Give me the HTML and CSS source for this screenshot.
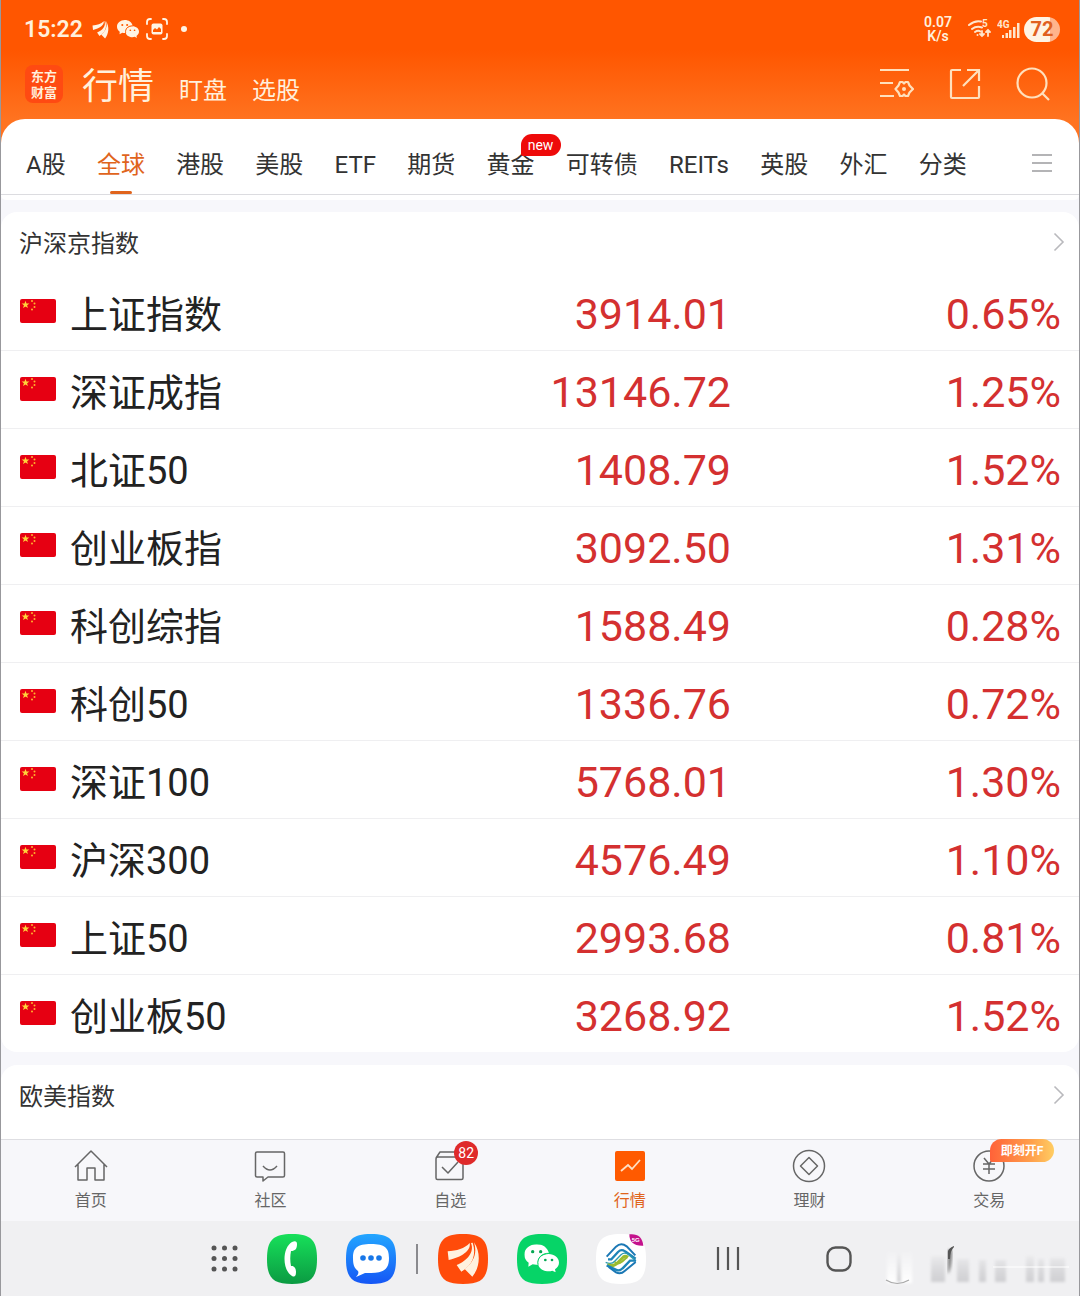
FILE: index.html
```html
<!DOCTYPE html>
<html lang="zh-CN">
<head>
<meta charset="utf-8">
<meta name="viewport" content="width=device-width, initial-scale=1">
<title>行情</title>
<link rel="stylesheet" href="styles.css">
</head>
<body>
<svg class="sprite" aria-hidden="true">
  <symbol id="flag-cn" viewBox="0 0 36 24">
    <rect width="36" height="24" rx="2" fill="#e60012"/>
    <path fill="#ffd43a" d="M5.500 1.800l1 2.700h2.900L7.100 6.200l.8 2.900-2.400-1.700-2.400 1.700.8-2.900-2.300-1.700h2.900z"/>
    <g fill="#ffb52e"><circle cx="12" cy="2" r="1"/><circle cx="14.500" cy="4.500" r="1"/><circle cx="14.500" cy="8" r="1"/><circle cx="12" cy="10.500" r="1"/></g>
  </symbol>
  <symbol id="chevron" viewBox="0 0 12 20"><path d="M1.500 1.500L10 10l-8.500 8.500" fill="none" stroke="#b9b9bd" stroke-width="1.600"/></symbol>
  <symbol id="feathers" viewBox="26 20 106 110">
    <path d="M29 52C56 50 80 44 95 27C100 50 70 70 32 78Z"/>
    <path d="M99 27C110 54 88 80 56 93L70 113C104 92 116 62 104 26Z"/>
    <path d="M108 25C118 55 109 83 80 105L103 128C124 103 131 59 108 25Z"/>
  </symbol>
  <symbol id="wechat" viewBox="0 0 104 84">
    <path d="M37 0C16 0 0 14 0 31c0 10 5 18 13 24l-1 12 13-7c5 1 10 2 16 1-4-20 12-35 33-34C70 10 55 0 37 0z"/>
    <path d="M73 29c-18 0-32 11-32 26s14 26 32 26c4 0 8-1 11-2l10 5-2-9c7-5 12-12 12-20 0-15-14-26-31-26z"/>
  </symbol>
</svg>

<div class="app">
  <header class="top">
    <div class="status">
      <div class="status-left">
        <time class="clock">15:22</time>
        <svg class="s-feather" width="18" height="19" fill="#fff4e4"><use href="#feathers"/></svg>
        <svg class="s-wechat" width="22" height="18" viewBox="0 0 104 84"><use href="#wechat" fill="#fff4e4"/><g fill="#ff5a00"><circle cx="25" cy="23" r="5"/><circle cx="48" cy="23" r="5"/><circle cx="63" cy="48" r="4"/><circle cx="83" cy="48" r="4"/></g><path d="M41 61C37 41 53 26 74 27" fill="none" stroke="#ff5a00" stroke-width="4"/></svg>
        <svg width="22" height="22" viewBox="0 0 22 22" fill="none" stroke="#fff4e4" stroke-width="1.800" stroke-linecap="round"><path d="M1 6V4q0-3 3-3h1M17 1h1q3 0 3 3v2M21 16v2q0 3-3 3h-1M5 21H4q-3 0-3-3v-2"/><rect x="5.500" y="5.500" width="11" height="11" rx="2" fill="#fff4e4" stroke="none"/><path d="M7 14v-2l2-2 2 1.500 2-2.500 2 2v3z" fill="#ff5a00" stroke="none"/></svg>
        <span class="more-dot"></span>
      </div>
      <div class="status-right">
        <div class="speed"><span>0.07</span><span>K/s</span></div>
        <svg width="25" height="20" viewBox="0 0 25 20" fill="none" stroke="#ffe6cc" stroke-width="2" stroke-linecap="round"><path d="M1 6Q7 1 13 2.500M4 10q4.500-3.500 10-1.500M7 13q3-2 5.500-.5"/><circle cx="9.500" cy="16" r="1" fill="#ffe6cc" stroke="none"/><path d="M14 12v5m-2-2l2 2 2-2M20 17v-6m-2 2l2-2 2 2" stroke-width="1.800"/><text x="14" y="8" class="tiny-mark">5</text></svg>
        <svg width="23" height="20" viewBox="0 0 23 20" fill="#ffe6cc"><text x="0" y="9" class="tiny-mark">4G</text><path d="M5 16h2v3H5zM8.500 14H11v5H8.500zM12 11h2.500v8H12zM16 8h2.500v11H16zM20 4h2.500v15H20z"/></svg>
        <span class="battery">72</span>
      </div>
    </div>
    <div class="titlebar">
      <span class="brand"><span>东方</span><span>财富</span></span>
      <nav class="sections">
        <a class="section current" href="#market">行情</a>
        <a class="section" href="#watch">盯盘</a>
        <a class="section" href="#pick">选股</a>
      </nav>
      <div class="tools">
        <button type="button" aria-label="设置"><svg width="34" height="32" viewBox="0 0 34 32" fill="none" stroke="#ffe0bd" stroke-width="2.200"><path d="M0 2h29M0 15h13M0 28h14"/><path d="M20 14h2.500l1.500 1.500 1.500-1.500H28l1.500 3.500L33 21l-3.500 3.500L28 28h-2.500L24 26.500 22.500 28H20l-1.500-3.500L15.500 21l3-3.500z" stroke-linejoin="round"/><circle cx="24" cy="21" r="2" fill="#ffe0bd" stroke="none"/></svg></button>
        <button type="button" aria-label="分享"><svg width="32" height="32" viewBox="0 0 32 32" fill="none" stroke="#ffe0bd" stroke-width="2.200"><path d="M12 2H3q-1 0-1 1v26q0 1 1 1h26q1 0 1-1V18M18 2h12v11M30 2L14 18"/></svg></button>
        <button type="button" aria-label="搜索"><svg width="34" height="34" viewBox="0 0 34 34" fill="none" stroke="#ffe0bd" stroke-width="2.200"><circle cx="16" cy="16" r="14.500"/><path d="M26 26l7 7"/></svg></button>
      </div>
    </div>
  </header>

  <nav class="tabs">
    <a class="tab" href="#a">A股</a>
    <a class="tab active" href="#global">全球</a>
    <a class="tab" href="#hk">港股</a>
    <a class="tab" href="#us">美股</a>
    <a class="tab" href="#etf">ETF</a>
    <a class="tab" href="#futures">期货</a>
    <a class="tab" href="#gold">黄金<span class="new-badge">new</span></a>
    <a class="tab" href="#cb">可转债</a>
    <a class="tab" href="#reits">REITs</a>
    <a class="tab" href="#uk">英股</a>
    <a class="tab" href="#fx">外汇</a>
    <a class="tab" href="#all">分类</a>
    <button class="menu" type="button" aria-label="菜单"><svg width="20" height="20" viewBox="0 0 20 20" stroke="#b4b4b6" stroke-width="2"><path d="M0 2h20M0 10h20M0 18h20"/></svg></button>
  </nav>

  <main class="content">
    <div class="card-tail"></div>
    <section class="card">
      <h2 class="card-head"><a href="#cn">沪深京指数<svg width="12" height="20"><use href="#chevron"/></svg></a></h2>
      <table class="quotes">
        <tbody>
          <tr><th scope="row"><span class="name"><svg class="flag"><use href="#flag-cn"/></svg>上证指数</span></th><td class="price">3914.01</td><td class="change">0.65%</td></tr>
          <tr><th scope="row"><span class="name"><svg class="flag"><use href="#flag-cn"/></svg>深证成指</span></th><td class="price">13146.72</td><td class="change">1.25%</td></tr>
          <tr><th scope="row"><span class="name"><svg class="flag"><use href="#flag-cn"/></svg>北证50</span></th><td class="price">1408.79</td><td class="change">1.52%</td></tr>
          <tr><th scope="row"><span class="name"><svg class="flag"><use href="#flag-cn"/></svg>创业板指</span></th><td class="price">3092.50</td><td class="change">1.31%</td></tr>
          <tr><th scope="row"><span class="name"><svg class="flag"><use href="#flag-cn"/></svg>科创综指</span></th><td class="price">1588.49</td><td class="change">0.28%</td></tr>
          <tr><th scope="row"><span class="name"><svg class="flag"><use href="#flag-cn"/></svg>科创50</span></th><td class="price">1336.76</td><td class="change">0.72%</td></tr>
          <tr><th scope="row"><span class="name"><svg class="flag"><use href="#flag-cn"/></svg>深证100</span></th><td class="price">5768.01</td><td class="change">1.30%</td></tr>
          <tr><th scope="row"><span class="name"><svg class="flag"><use href="#flag-cn"/></svg>沪深300</span></th><td class="price">4576.49</td><td class="change">1.10%</td></tr>
          <tr><th scope="row"><span class="name"><svg class="flag"><use href="#flag-cn"/></svg>上证50</span></th><td class="price">2993.68</td><td class="change">0.81%</td></tr>
          <tr><th scope="row"><span class="name"><svg class="flag"><use href="#flag-cn"/></svg>创业板50</span></th><td class="price">3268.92</td><td class="change">1.52%</td></tr>
        </tbody>
      </table>
    </section>
    <section class="card card-next">
      <h2 class="card-head"><a href="#west">欧美指数<svg width="12" height="20"><use href="#chevron"/></svg></a></h2>
    </section>
  </main>

  <nav class="bottom">
    <a href="#home"><span class="ico"><svg width="34" height="34" viewBox="0 0 34 34" class="line"><path d="M1 18L17 2l16 16M4 15v16h9V19h8v12h9V15"/></svg></span>首页</a>
    <a href="#community"><span class="ico"><svg width="34" height="34" viewBox="0 0 34 34" class="line"><path d="M4 3h26q1.500 0 1.500 1.500v22q0 1.500-1.500 1.500H15l-5 4v-4H4q-1.500 0-1.500-1.500v-22Q2.500 3 4 3M10 17q7 8 14 0"/></svg></span>社区</a>
    <a href="#mine"><span class="ico"><svg width="34" height="34" viewBox="0 0 34 34" class="line"><path d="M3 10v19q0 1.500 1.500 1.500h24q1.500 0 1.500-1.500V8M3 10q0-2 2-2h25L26 3H7L3 9M9 18l6 6 10-11"/></svg><span class="count">82</span></span>自选</a>
    <a class="active" href="#market"><span class="ico"><svg width="34" height="34" viewBox="0 0 34 34"><rect x="2" y="2" width="30" height="30" rx="2" fill="#ff5a00"/><path d="M8 22l7-6 4 4 8-9" fill="none" stroke="#ffe0c4" stroke-width="1.800"/></svg></span>行情</a>
    <a href="#wealth"><span class="ico"><svg width="34" height="34" viewBox="0 0 34 34" class="line"><circle cx="17" cy="17" r="15.500"/><path d="M17 8.500l8.500 8.500-8.500 8.500L8.500 17z"/></svg></span>理财</a>
    <a href="#trade"><span class="ico"><svg width="34" height="34" viewBox="0 0 34 34" class="line"><circle cx="17" cy="17" r="15"/><path d="M12 9l5 6 5-6M11 15h12M11 20h12M17 15v10"/></svg><span class="promo">即刻开F</span></span>交易</a>
  </nav>

  <footer class="dock">
    <div class="dock-group">
      <button type="button" aria-label="应用"><svg width="27" height="27" viewBox="0 0 27 27" fill="#555"><circle cx="3" cy="3" r="2.500"/><circle cx="13.500" cy="3" r="2.500"/><circle cx="24" cy="3" r="2.500"/><circle cx="3" cy="13.500" r="2.500"/><circle cx="13.500" cy="13.500" r="2.500"/><circle cx="24" cy="13.500" r="2.500"/><circle cx="3" cy="24" r="2.500"/><circle cx="13.500" cy="24" r="2.500"/><circle cx="24" cy="24" r="2.500"/></svg></button>
      <button type="button" aria-label="电话"><svg width="50" height="50" viewBox="0 0 50 50"><defs><linearGradient id="g-phone" x2="0" y2="1"><stop stop-color="#17e05a"/><stop offset="1" stop-color="#0b9a42"/></linearGradient></defs><path d="M25 0C44 0 50 6 50 25S44 50 25 50 0 44 0 25 6 0 25 0z" fill="url(#g-phone)"/><path d="M25 8c3-1.500 5-1 5 2 0 5-2 7-6 7-1 5-1 10 0 15 3-.5 5 2 5 6 0 5-2 5-4 4-10-6-10-28 0-34z" fill="#fff"/></svg></button>
      <button type="button" aria-label="信息"><svg width="50" height="50" viewBox="0 0 50 50"><defs><linearGradient id="g-msg" x2="0" y2="1"><stop stop-color="#23a6ff"/><stop offset="1" stop-color="#1556f5"/></linearGradient></defs><path d="M25 0C44 0 50 6 50 25S44 50 25 50 0 44 0 25 6 0 25 0z" fill="url(#g-msg)"/><path d="M25 10c14 0 18 4 18 14s-4 15-18 15h-6l-9 4c2-2 3-4 2-6-4-3-5-7-5-13 0-10 4-14 18-14z" fill="#fff"/><g fill="#1877e8"><circle cx="17" cy="24" r="2.800"/><circle cx="25" cy="24" r="2.800"/><circle cx="33" cy="24" r="2.800"/></g></svg></button>
    </div>
    <span class="dock-sep"></span>
    <div class="dock-group">
      <button type="button" aria-label="东方财富"><svg width="50" height="50" viewBox="0 0 150 150"><path d="M75 0C132 0 150 18 150 75s-18 75-75 75S0 132 0 75 18 0 75 0z" fill="#ff4b0a"/><use href="#feathers" x="26" y="20" width="106" height="110" fill="#fff2df"/></svg></button>
      <button type="button" aria-label="微信"><svg width="50" height="50" viewBox="0 0 150 150"><path d="M75 0C132 0 150 18 150 75s-18 75-75 75S0 132 0 75 18 0 75 0z" fill="#06d467"/><g transform="translate(22 31)"><use href="#wechat" width="104" height="84" fill="#fff"/><path d="M41 61C37 41 53 26 74 27" fill="none" stroke="#06d467" stroke-width="3"/><g fill="#06a853"><circle cx="25" cy="22" r="5"/><circle cx="49" cy="22" r="5"/><circle cx="63" cy="47" r="4"/><circle cx="83" cy="47" r="4"/></g></g></svg></button>
      <button type="button" aria-label="中国移动"><svg width="50" height="50" viewBox="0 0 150 150"><path d="M75 0C132 0 150 18 150 75s-18 75-75 75S0 132 0 75 18 0 75 0z" fill="#fff"/><g fill="none" stroke-width="6"><path d="M32 68L60 38Q75 24 92 37L118 64" stroke="#1b78b5"/><path d="M36 76h10L66 54q10-10 21-2l32 22" stroke="#1d84b8" stroke-width="7"/><path d="M29 85q17 8 28-4l18-19q10-9 21-1l24 20" stroke="#2b9bb0" stroke-width="4"/><path d="M34 92q18 8 31-6l17-17q6-5 14 1" stroke="#9bbb2f" stroke-width="9"/><path d="M56 84q12 9 22-1l15-13" stroke="#9bbb2f" stroke-width="6"/><path d="M32 94l27 13q12 6 21-4l22-23h18" stroke="#1d84b8" stroke-width="7"/><path d="M38 99l22 16q14 7 26-4l33-27" stroke="#1b78b5"/></g><path d="M100 1q38-4 42 34q-42 2-42-34z" fill="#c4128c"/><text x="107" y="25" class="five-g">5G</text></svg></button>
    </div>
    <div class="dock-keys">
      <button type="button" aria-label="最近任务"><svg width="24" height="25" viewBox="0 0 24 25" stroke="#555" stroke-width="2.200"><path d="M2 1v23M12 1v23M22 1v23"/></svg></button>
      <button type="button" aria-label="主页"><svg width="26" height="26" viewBox="0 0 26 26"><rect x="1.500" y="1.500" width="23" height="23" rx="8" fill="none" stroke="#555" stroke-width="2.400"/></svg></button>
    </div>
    <svg class="smudge" width="194" height="44" viewBox="0 0 194 44" aria-hidden="true">
      <defs>
        <filter id="soft" x="-20%" y="-20%" width="140%" height="140%"><feGaussianBlur stdDeviation="1.800"/></filter>
        <linearGradient id="fade" x2="0" y2="1"><stop stop-color="#c4c4c8" stop-opacity="0"/><stop offset="1" stop-color="#cfcfd2"/></linearGradient>
        <linearGradient id="lift" x2="0" y2="1"><stop stop-color="#fff" stop-opacity="0"/><stop offset="1" stop-color="#fff"/></linearGradient>
      </defs>
      <g filter="url(#soft)"><path d="M6 4h25v33H6z" fill="url(#lift)"/><path d="M16 6h4v30h-4zM50 10h14v26H50zM76 13h12v23H76zM98 14h7v22h-7zM114 14h11v22h-11zM145 10h8v26h-8zM157 13h6v23h-6zM169 12h15v24h-15z" fill="url(#fade)"/></g>
      <path d="M5 34q11 7 23 0" fill="none" stroke="#aaa" stroke-width="1.200"/>
      <path d="M112 21h76" stroke="#fff" stroke-width="1.200"/>
      <g filter="url(#soft)"><path d="M67 4v24q4-6 4-24z" fill="#777"/></g>
      <path d="M73 0q-5 2-6 5v8h2q0-8 4-12z" fill="#555"/>
    </svg>
  </footer>
</div>
</body>
</html>
```
FILE: styles.css
```css
* { box-sizing: border-box; }

body {
  margin: 0;
  background: #f7f7fb;
  color: #333;
  font-family: Roboto, "Noto Sans CJK SC", sans-serif;
}

a { color: inherit; text-decoration: none; }

button {
  display: flex;
  padding: 0;
  border: 0;
  background: none;
}

svg { display: block; flex: none; }

.sprite { position: absolute; width: 0; height: 0; }

.app {
  display: flex;
  flex-direction: column;
  min-height: 100vh;
  border: solid #98989c;
  border-width: 0 1px;
}

/* header */
.top {
  padding: 0 19px 41px 23px;
  margin-bottom: -24px;
  background: linear-gradient(#ff5600 0, #ff5600 50px, #ff7320 120px);
  color: #fff0dc;
}

.status {
  display: flex;
  justify-content: space-between;
  height: 58px;
}

.status-left, .status-right { display: flex; align-items: center; }
.status-left { gap: 7px; }
.status-right { gap: 4px; }

.clock {
  margin-right: 2px;
  font-size: 23px;
  font-weight: 600;
}

.more-dot {
  width: 6px;
  height: 6px;
  margin-left: 6px;
  border-radius: 50%;
  background: #fff4e4;
}

.speed {
  display: grid;
  margin-right: 12px;
  font-size: 14px;
  line-height: 14px;
  font-weight: 600;
  text-align: center;
}

.tiny-mark {
  fill: #ffe6cc;
  stroke: none;
  font-size: 10px;
  font-weight: 700;
}

.battery {
  width: 36px;
  height: 25px;
  border-radius: 13px;
  background: linear-gradient(90deg, #fff4e4 72%, #ffb48c 72%);
  color: #e06020;
  font-size: 20px;
  line-height: 25px;
  font-weight: 700;
  text-align: center;
}

.titlebar {
  display: flex;
  align-items: center;
  height: 44px;
}

.brand {
  display: grid;
  align-content: center;
  width: 38px;
  height: 38px;
  margin: 8px 0 0 1px;
  border-radius: 8px;
  background: #ff4a12;
  font-family: "Noto Sans CJK SC", sans-serif;
  font-size: 13px;
  line-height: 16px;
  font-weight: 700;
  text-align: center;
}

.sections {
  display: flex;
  align-items: baseline;
  gap: 25px;
  margin: 18px 0 0 19px;
}

.section { font-size: 24px; line-height: 48px; }
.section.current { font-size: 36px; }

.tools {
  display: flex;
  align-items: center;
  gap: 35px;
  margin: 8px 10px 0 auto;
}

/* market tabs */
.tabs {
  display: flex;
  align-items: center;
  justify-content: space-between;
  height: 76px;
  padding: 16px 27px 0 25px;
  border-bottom: 1px solid #dcdce0;
  border-radius: 24px 24px 0 0;
  background: #fff;
  font-size: 24px;
  line-height: 32px;
  white-space: nowrap;
}

.tab { position: relative; }
.tab.active { color: #e0641c; }

.tab.active::after {
  content: "";
  position: absolute;
  bottom: -13px;
  left: 50%;
  width: 22px;
  height: 3px;
  margin-left: -11px;
  border-radius: 2px;
  background: #e0641c;
}

.new-badge {
  position: absolute;
  top: -15px;
  left: 34px;
  width: 40px;
  height: 22px;
  border-radius: 11px 11px 11px 2px;
  background: #ee0a0a;
  color: #fff;
  font-size: 14px;
  line-height: 23px;
  text-align: center;
}

.menu { margin: 0 0 3px 34px; }

/* index lists */
.content { flex: 1; }

.card-tail {
  height: 5px;
  margin-bottom: 12px;
  border-radius: 0 0 16px 16px;
  background: #fff;
}

.card {
  margin-bottom: 13px;
  border-radius: 16px;
  background: #fff;
}

.card-next { margin-bottom: 0; border-radius: 16px 16px 0 0; padding-bottom: 14px; }

.card-head {
  margin: 0;
  font-size: 24px;
  line-height: 56px;
  font-weight: 400;
}

.card-head a {
  display: flex;
  align-items: center;
  justify-content: space-between;
  padding: 4px 14px 0 18px;
}

.card-head svg { margin-bottom: 4px; }

.quotes {
  width: 100%;
  border-collapse: collapse;
  table-layout: fixed;
}

.quotes th, .quotes td {
  height: 78px;
  padding: 0;
  border-bottom: 1px solid #efeff1;
  line-height: 56px;
  font-weight: 400;
}

.quotes tr:last-child > * { border-bottom: 0; }

.quotes th { width: 42%; text-align: left; }

.name {
  display: flex;
  align-items: center;
  gap: 14px;
  padding: 8px 0 0 19px;
  color: #222;
  font-size: 38px;
}

.flag { width: 36px; height: 24px; margin-bottom: 8px; }

.quotes td {
  padding-top: 6px;
  color: #d43030;
  font-size: 43px;
  text-align: right;
}

.quotes .price { width: 26%; padding-right: 3px; }
.quotes .change { padding-right: 18px; }

/* app navigation */
.bottom {
  display: grid;
  grid-template-columns: repeat(6, 1fr);
  height: 82px;
  padding-top: 9px;
  border-top: 1px solid #dedee2;
  background: #f7f7fa;
  color: #666;
  font-size: 16px;
  line-height: 24px;
}

.bottom a {
  display: flex;
  flex-direction: column;
  align-items: center;
  gap: 6px;
}

.bottom .active { color: #e0641c; }
.ico { position: relative; }
.line { fill: none; stroke: #666; stroke-width: 1.500; stroke-linejoin: round; }

.count {
  position: absolute;
  top: -8px;
  left: 21px;
  width: 24px;
  height: 24px;
  border-radius: 50%;
  background: #df2a2a;
  color: #fff;
  font-size: 14px;
  line-height: 24px;
  text-align: center;
}

.promo {
  position: absolute;
  top: -10px;
  left: 18px;
  width: 64px;
  height: 23px;
  border-radius: 12px 12px 12px 2px;
  background: linear-gradient(90deg, #ff6238, #ffa04c 65%, #ffcd62);
  color: #fff;
  font-size: 12px;
  line-height: 24px;
  font-weight: 700;
  text-align: center;
}

/* system dock */
.dock {
  position: relative;
  display: flex;
  align-items: center;
  height: 75px;
  padding-left: 210px;
  background: #f0f0f2;
}

.dock-group { display: flex; align-items: center; gap: 29px; }

.dock-sep {
  width: 2px;
  height: 30px;
  margin: 0 20px;
  background: #8a8a8e;
}

.dock-keys { display: flex; align-items: center; gap: 86px; margin-left: 70px; }

.five-g { fill: #fff; font-size: 18px; font-weight: 700; }

.smudge { position: absolute; right: 4px; bottom: 6px; }
```
